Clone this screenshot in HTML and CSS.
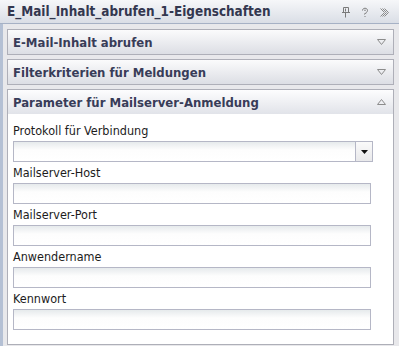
FILE: index.html
```html
<!DOCTYPE html>
<html lang="de">
<head>
<meta charset="utf-8">
<title>Eigenschaften</title>
<link rel="stylesheet" href="styles.css">
</head>
<body>
<div class="window">
  <div class="titlebar">
    <span class="title">E_Mail_Inhalt_abrufen_1-Eigenschaften</span>
    <div class="tools">
      <svg class="tool" width="8" height="11" viewBox="0 0 8 11"><path d="M1.5 0.5h5v5h-5z M0 5.5h8 M3.5 5.5v5 M3.5 1.5v3" fill="none" stroke="#7a7a7a" stroke-width="1"/></svg>
      <svg class="tool" width="8" height="10" viewBox="0 0 8 10"><path d="M1.5 3.5 C1.5 0.5 6.5 0.5 6.5 3.5 C6.5 5 4.5 5.5 4.5 7 M3.5 6.5v1 M3.5 3.5 C3.5 2.5 4.5 2.5 4.5 3.5 M3.5 9.5h1" fill="none" stroke="#7a7a7a" stroke-width="1"/></svg>
      <svg class="tool" width="9" height="9" viewBox="0 0 9 9"><path d="M0.5 0.5l4 4l-4 4 M2.5 0.5l4 4l-4 4 M4.5 0.5l4 4l-4 4" fill="none" stroke="#8a8a8a" stroke-width="1"/></svg>
    </div>
  </div>
  <div class="body">
    <div class="panel">
      <div class="panel-head">
        <span class="panel-title">E-Mail-Inhalt abrufen</span>
        <svg class="toggle" width="9" height="6" viewBox="0 0 9 6"><path d="M0.5 0.5h8l-4 5z" fill="none" stroke="#8c8c8c" stroke-width="1"/></svg>
      </div>
    </div>
    <div class="panel">
      <div class="panel-head">
        <span class="panel-title">Filterkriterien für Meldungen</span>
        <svg class="toggle" width="9" height="6" viewBox="0 0 9 6"><path d="M0.5 0.5h8l-4 5z" fill="none" stroke="#8c8c8c" stroke-width="1"/></svg>
      </div>
    </div>
    <div class="panel open">
      <div class="panel-head">
        <span class="panel-title">Parameter für Mailserver-Anmeldung</span>
        <svg class="toggle" width="9" height="6" viewBox="0 0 9 6"><path d="M0.5 5.5h8l-4-5z" fill="none" stroke="#8c8c8c" stroke-width="1"/></svg>
      </div>
      <div class="panel-content">
        <label class="label">Protokoll für Verbindung</label>
        <div class="select">
          <div class="select-field"></div>
          <div class="select-btn"><svg width="7" height="4" viewBox="0 0 7 4"><path d="M0 0h7l-3.5 4z" fill="#111"/></svg></div>
        </div>
        <label class="label">Mailserver-Host</label>
        <div class="input"></div>
        <label class="label">Mailserver-Port</label>
        <div class="input"></div>
        <label class="label">Anwendername</label>
        <div class="input"></div>
        <label class="label">Kennwort</label>
        <div class="input"></div>
      </div>
    </div>
  </div>
</div>
</body>
</html>
```
FILE: styles.css
```css
html, body {
  margin: 0;
  padding: 0;
}
body {
  width: 399px;
  height: 346px;
  overflow: hidden;
  font-family: "DejaVu Sans Condensed", "DejaVu Sans", sans-serif;
  background: #e9e9ec;
}
.window {
  display: flex;
  flex-direction: column;
  height: 346px;
}
.titlebar {
  height: 23px;
  flex: none;
  display: flex;
  align-items: center;
  justify-content: space-between;
  padding: 0 10px 0 7px;
  background: linear-gradient(#f6f7f9, #dadee6);
  border-bottom: 1px solid #a6b1c5;
}
.title {
  font-weight: bold;
  font-size: 13.4px;
  color: #33374f;
}
.tools {
  display: flex;
  align-items: center;
  gap: 11px;
  padding-top: 1px;
}
.tool {
  display: block;
}
.body {
  flex: 1;
  display: flex;
  flex-direction: column;
  gap: 4px;
  padding: 5px 5px 1px 4px;
  border-left: 3px solid #b4c0d4;
  background: #e8e8eb;
  min-height: 0;
}
.panel {
  border: 1px solid #aeafb8;
  background: #fff;
  display: flex;
  flex-direction: column;
}
.panel.open {
  flex: 1;
}
.panel-head {
  height: 24px;
  display: flex;
  align-items: center;
  justify-content: space-between;
  padding: 0 7px 0 5px;
  background: linear-gradient(#fbfbfc, #dcdee4);
}
.panel.open .panel-head {
  background: linear-gradient(#fdfdfe, #e1e3e9);
}
.panel-title {
  font-weight: bold;
  font-size: 13px;
  color: #383c58;
}
.toggle {
  display: block;
}
.panel-content {
  flex: 1;
  background: #fff;
  padding: 6px 0 0 5px;
  display: flex;
  flex-direction: column;
}
.label {
  height: 21px;
  line-height: 21px;
  font-size: 12.5px;
  color: #1c1c1c;
}
.input {
  width: 356px;
  height: 19px;
  border: 1px solid #b5b7c6;
  background: linear-gradient(#e6eaec, #fdfdfd 8px, #ffffff);
}
.select {
  width: 358px;
  height: 19px;
  border: 1px solid #b5b7c6;
  display: flex;
}
.select-field {
  flex: 1;
  background: linear-gradient(#e6eaec, #fdfdfd 8px, #ffffff);
}
.select-btn {
  width: 16px;
  border-left: 1px solid #b5b7c6;
  background: linear-gradient(#fafafa, #e9e9eb);
  display: flex;
  align-items: center;
  justify-content: center;
}
```
